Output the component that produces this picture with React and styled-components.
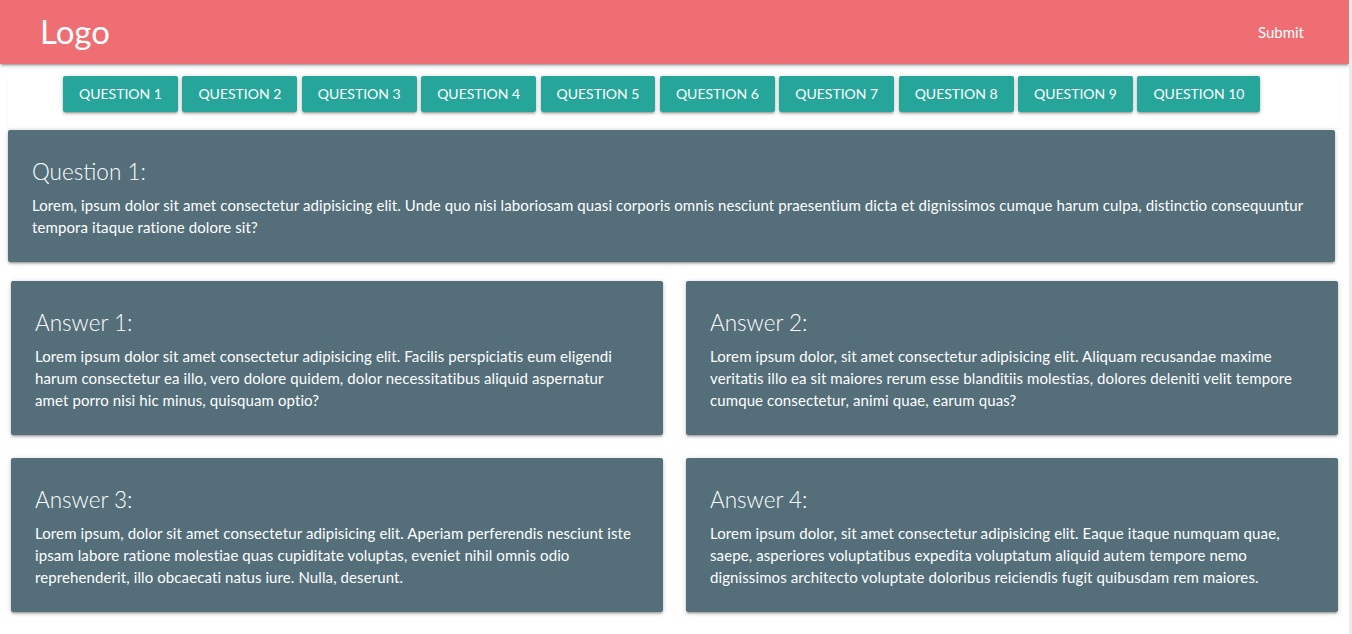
import React from "react";
import styled, { createGlobalStyle } from "styled-components";

const questions = Array.from({ length: 10 }, (_, i) => `Question ${i + 1}`);

const answers = [
  "Lorem ipsum dolor sit amet consectetur adipisicing elit. Facilis perspiciatis eum eligendi harum consectetur ea illo, vero dolore quidem, dolor necessitatibus aliquid aspernatur amet porro nisi hic minus, quisquam optio?",
  "Lorem ipsum dolor, sit amet consectetur adipisicing elit. Aliquam recusandae maxime veritatis illo ea sit maiores rerum esse blanditiis molestias, dolores deleniti velit tempore cumque consectetur, animi quae, earum quas?",
  "Lorem ipsum, dolor sit amet consectetur adipisicing elit. Aperiam perferendis nesciunt iste ipsam labore ratione molestiae quas cupiditate voluptas, eveniet nihil omnis odio reprehenderit, illo obcaecati natus iure. Nulla, deserunt.",
  "Lorem ipsum dolor, sit amet consectetur adipisicing elit. Eaque itaque numquam quae, saepe, asperiores voluptatibus expedita voluptatum aliquid autem tempore nemo dignissimos architecto voluptate doloribus reiciendis fugit quibusdam rem maiores.",
];

export default function App() {
  return (
    <>
      <GlobalStyle />
      <Nav>
        <Brand>Logo</Brand>
        <NavLink>Submit</NavLink>
      </Nav>
      <ButtonBar>
        {questions.map((q) => (
          <QuestionButton key={q}>{q}</QuestionButton>
        ))}
      </ButtonBar>
      <QuestionCard>
        <CardTitle>Question 1:</CardTitle>
        <CardText>
          Lorem, ipsum dolor sit amet consectetur adipisicing elit. Unde quo
          nisi laboriosam quasi corporis omnis nesciunt praesentium dicta et
          dignissimos cumque harum culpa, distinctio consequuntur tempora itaque
          ratione dolore sit?
        </CardText>
      </QuestionCard>
      <AnswerGrid>
        {answers.map((text, i) => (
          <Card key={i}>
            <CardTitle>Answer {i + 1}:</CardTitle>
            <CardText>{text}</CardText>
          </Card>
        ))}
      </AnswerGrid>
    </>
  );
}

const GlobalStyle = createGlobalStyle`
  body {
    margin: 0;
    min-height: 100vh;
    background: #fff;
    border-right: 3px solid #ececec;
    font-family: "Segoe UI", Lato, "Noto Sans", sans-serif;
    padding-bottom: 30px;
  }
`;

const Nav = styled.nav`
  height: 64px;
  background: #ef6e73;
  color: #fff;
  display: flex;
  align-items: center;
  justify-content: space-between;
  padding: 0 30px 0 40px;
  box-shadow: 0 2px 2px 0 rgba(0, 0, 0, 0.14), 0 3px 1px -2px rgba(0, 0, 0, 0.12),
    0 1px 5px 0 rgba(0, 0, 0, 0.2);
`;

const Brand = styled.a`
  font-size: 33px;
  line-height: 64px;
  margin-top: -2px;
`;

const NavLink = styled.a`
  font-size: 15px;
  padding: 0 15px;
  line-height: 64px;
`;

const ButtonBar = styled.div`
  margin: 12px 8px 0;
  padding: 0 0 16px 55px;
  display: flex;
  gap: 4.4px;
  box-shadow: 0 1px 2px rgba(0, 0, 0, 0.05);
`;

const QuestionButton = styled.button`
  height: 36px;
  padding: 0 16px 1px;
  border: none;
  border-radius: 2px;
  background: #26a69a;
  color: #fff;
  font-family: inherit;
  font-size: 14px;
  letter-spacing: 0;
  text-transform: uppercase;
  box-shadow: 0 2px 2px 0 rgba(0, 0, 0, 0.14), 0 3px 1px -2px rgba(0, 0, 0, 0.12),
    0 1px 5px 0 rgba(0, 0, 0, 0.2);
`;

const Card = styled.div`
  background: #546e7a;
  color: #fff;
  border-radius: 2px;
  padding: 24px;
  box-shadow: 0 2px 2px 0 rgba(0, 0, 0, 0.14), 0 3px 1px -2px rgba(0, 0, 0, 0.12),
    0 1px 5px 0 rgba(0, 0, 0, 0.2);
`;

const QuestionCard = styled(Card)`
  margin: 2px 14px 0 8px;
`;

const AnswerGrid = styled.div`
  display: grid;
  grid-template-columns: 1fr 1fr;
  gap: 23px;
  padding: 0 11px;
  margin-top: 19px;
`;

const CardTitle = styled.h2`
  margin: 0 0 5px;
  padding-top: 1px;
  font-size: 22.5px;
  font-weight: 300;
  line-height: 34px;
`;

const CardText = styled.p`
  margin: 0;
  font-size: 15px;
  line-height: 22px;
  letter-spacing: 0.1px;
`;
